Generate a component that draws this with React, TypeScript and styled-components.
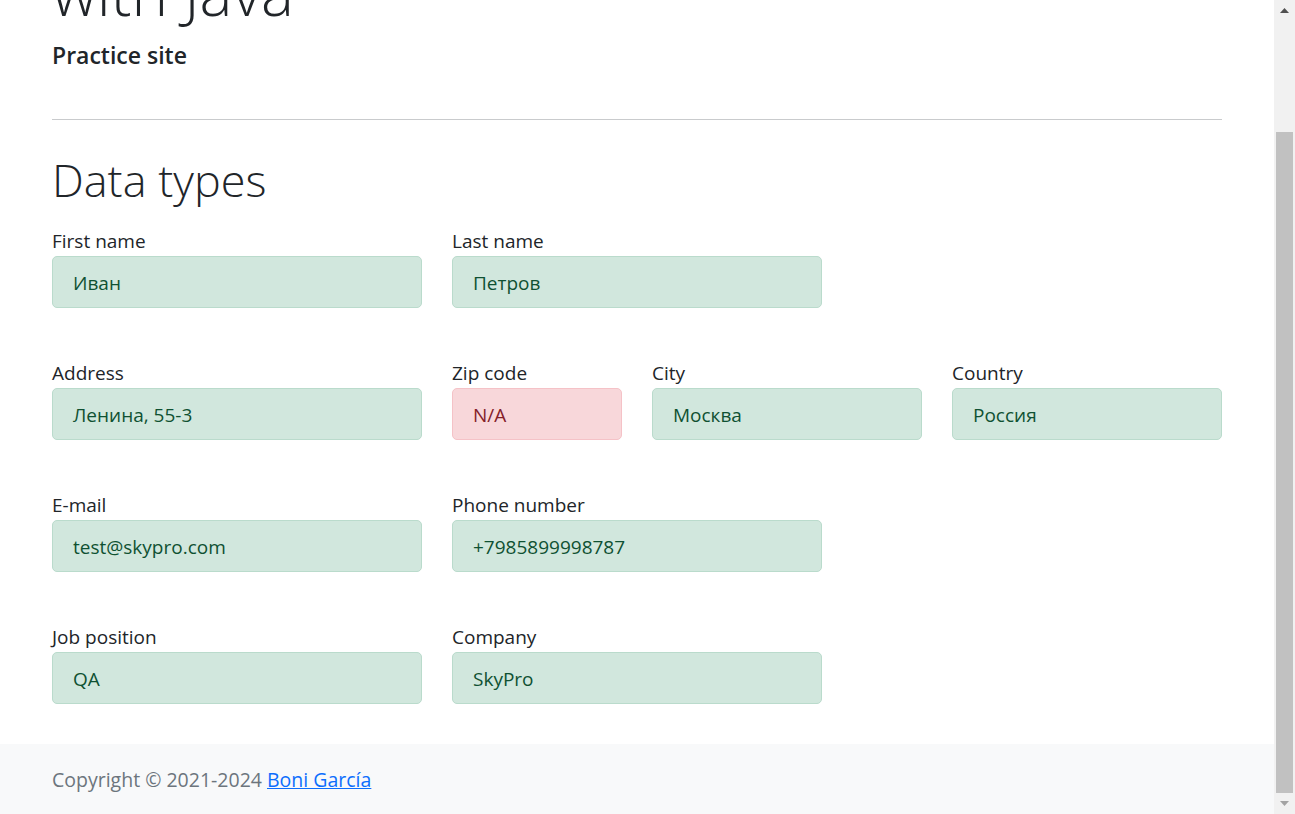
import React from 'react';
import styled, { createGlobalStyle } from 'styled-components';

const GlobalStyle = createGlobalStyle`
  html, body {
    margin: 0;
    padding: 0;
    height: 100%;
    overflow: hidden;
    background: #fff;
  }
  body {
    font-family: "Open Sans", "Noto Sans", Arial, sans-serif;
    color: #212529;
  }
  * { box-sizing: border-box; }
`;

const Frame = styled.div`
  display: flex;
  width: 100vw;
  height: 100vh;
  overflow: hidden;
`;

const Viewport = styled.div`
  flex: 1;
  display: flex;
  flex-direction: column;
  min-width: 0;
`;

const Main = styled.main`
  flex: 1;
  width: 1170px;
  margin: 0 auto;
`;

const Header = styled.header`
  height: 70px;
  display: flex;
  flex-direction: column;
  justify-content: flex-end;
  overflow: hidden;
`;

const BigTitle = styled.h1`
  margin: 0 0 19px;
  font-size: 62px;
  font-weight: 300;
  line-height: 1;
  white-space: nowrap;
`;

const Subtitle = styled.h5`
  margin: 0;
  font-size: 23px;
  font-weight: 600;
  line-height: 1.2;
`;

const Divider = styled.hr`
  margin: 49px 0 0;
  border: 0;
  border-top: 1px solid #c9cbcd;
`;

const SectionTitle = styled.h1`
  margin: 33px 0 0;
  font-size: 45px;
  font-weight: 300;
  line-height: 1.2;
`;

const Form = styled.form`
  margin-top: 20px;
  display: flex;
  flex-direction: column;
  gap: 51px;
`;

const Row = styled.div`
  display: grid;
  grid-template-columns: repeat(12, 1fr);
  column-gap: 30px;
`;

const Field = styled.label<{ $span: number }>`
  grid-column: span ${p => p.$span};
  display: flex;
  flex-direction: column;
`;

const LabelText = styled.span`
  font-size: 19px;
  line-height: 29px;
  color: #212529;
`;

const Value = styled.div<{ $invalid?: boolean }>`
  height: 52px;
  display: flex;
  align-items: center;
  padding: 2px 20px 0;
  font-size: 19px;
  border-radius: 5px;
  border: 1px solid ${p => (p.$invalid ? '#f5c2c7' : '#badbcc')};
  background: ${p => (p.$invalid ? '#f8d7da' : '#d1e7dd')};
  color: ${p => (p.$invalid ? '#842029' : '#0f5132')};
`;

const Footer = styled.footer`
  height: 70px;
  background: #f8f9fa;
  display: flex;
  align-items: center;
`;

const FooterInner = styled.div`
  width: 1170px;
  margin: 0 auto;
  font-size: 19.5px;
  color: #6c757d;
`;

const FooterLink = styled.a`
  color: #0d6efd;
  text-decoration: underline;
`;

const Scrollbar = styled.div`
  width: 21px;
  background: #f1f1f1;
  display: flex;
  flex-direction: column;
`;

const ArrowBox = styled.div`
  height: 21px;
  display: flex;
  align-items: center;
  justify-content: center;
`;

const Track = styled.div<{ $h: number }>`
  height: ${p => p.$h}px;
`;

const Thumb = styled.div`
  flex: 1;
  margin: 0 2px;
  background: #c1c1c1;
`;

const Arrow = ({ up, color }: { up?: boolean; color: string }) => (
  <svg width="9" height="5" viewBox="0 0 9 5">
    <polygon points={up ? '4.5,0 9,5 0,5' : '0,0 9,0 4.5,5'} fill={color} />
  </svg>
);

type FieldDef = { label: string; value: string; span: number; invalid?: boolean };

const rows: FieldDef[][] = [
  [
    { label: 'First name', value: 'Иван', span: 4 },
    { label: 'Last name', value: 'Петров', span: 4 },
  ],
  [
    { label: 'Address', value: 'Ленина, 55-3', span: 4 },
    { label: 'Zip code', value: 'N/A', span: 2, invalid: true },
    { label: 'City', value: 'Москва', span: 3 },
    { label: 'Country', value: 'Россия', span: 3 },
  ],
  [
    { label: 'E-mail', value: 'test@skypro.com', span: 4 },
    { label: 'Phone number', value: '+7985899998787', span: 4 },
  ],
  [
    { label: 'Job position', value: 'QA', span: 4 },
    { label: 'Company', value: 'SkyPro', span: 4 },
  ],
];

export default function App() {
  return (
    <Frame>
      <GlobalStyle />
      <Viewport>
        <Main>
          <Header>
            <BigTitle>with Java</BigTitle>
            <Subtitle>Practice site</Subtitle>
          </Header>
          <Divider />
          <SectionTitle>Data types</SectionTitle>
          <Form>
            {rows.map((row, i) => (
              <Row key={i}>
                {row.map(f => (
                  <Field key={f.label} $span={f.span}>
                    <LabelText>{f.label}</LabelText>
                    <Value $invalid={f.invalid}>{f.value}</Value>
                  </Field>
                ))}
              </Row>
            ))}
          </Form>
        </Main>
        <Footer>
          <FooterInner>
            Copyright © 2021-2024 <FooterLink href="#">Boni García</FooterLink>
          </FooterInner>
        </Footer>
      </Viewport>
      <Scrollbar>
        <ArrowBox>
          <Arrow up color="#505050" />
        </ArrowBox>
        <Track $h={111} />
        <Thumb />
        <ArrowBox>
          <Arrow color="#a3a3a3" />
        </ArrowBox>
      </Scrollbar>
    </Frame>
  );
}
